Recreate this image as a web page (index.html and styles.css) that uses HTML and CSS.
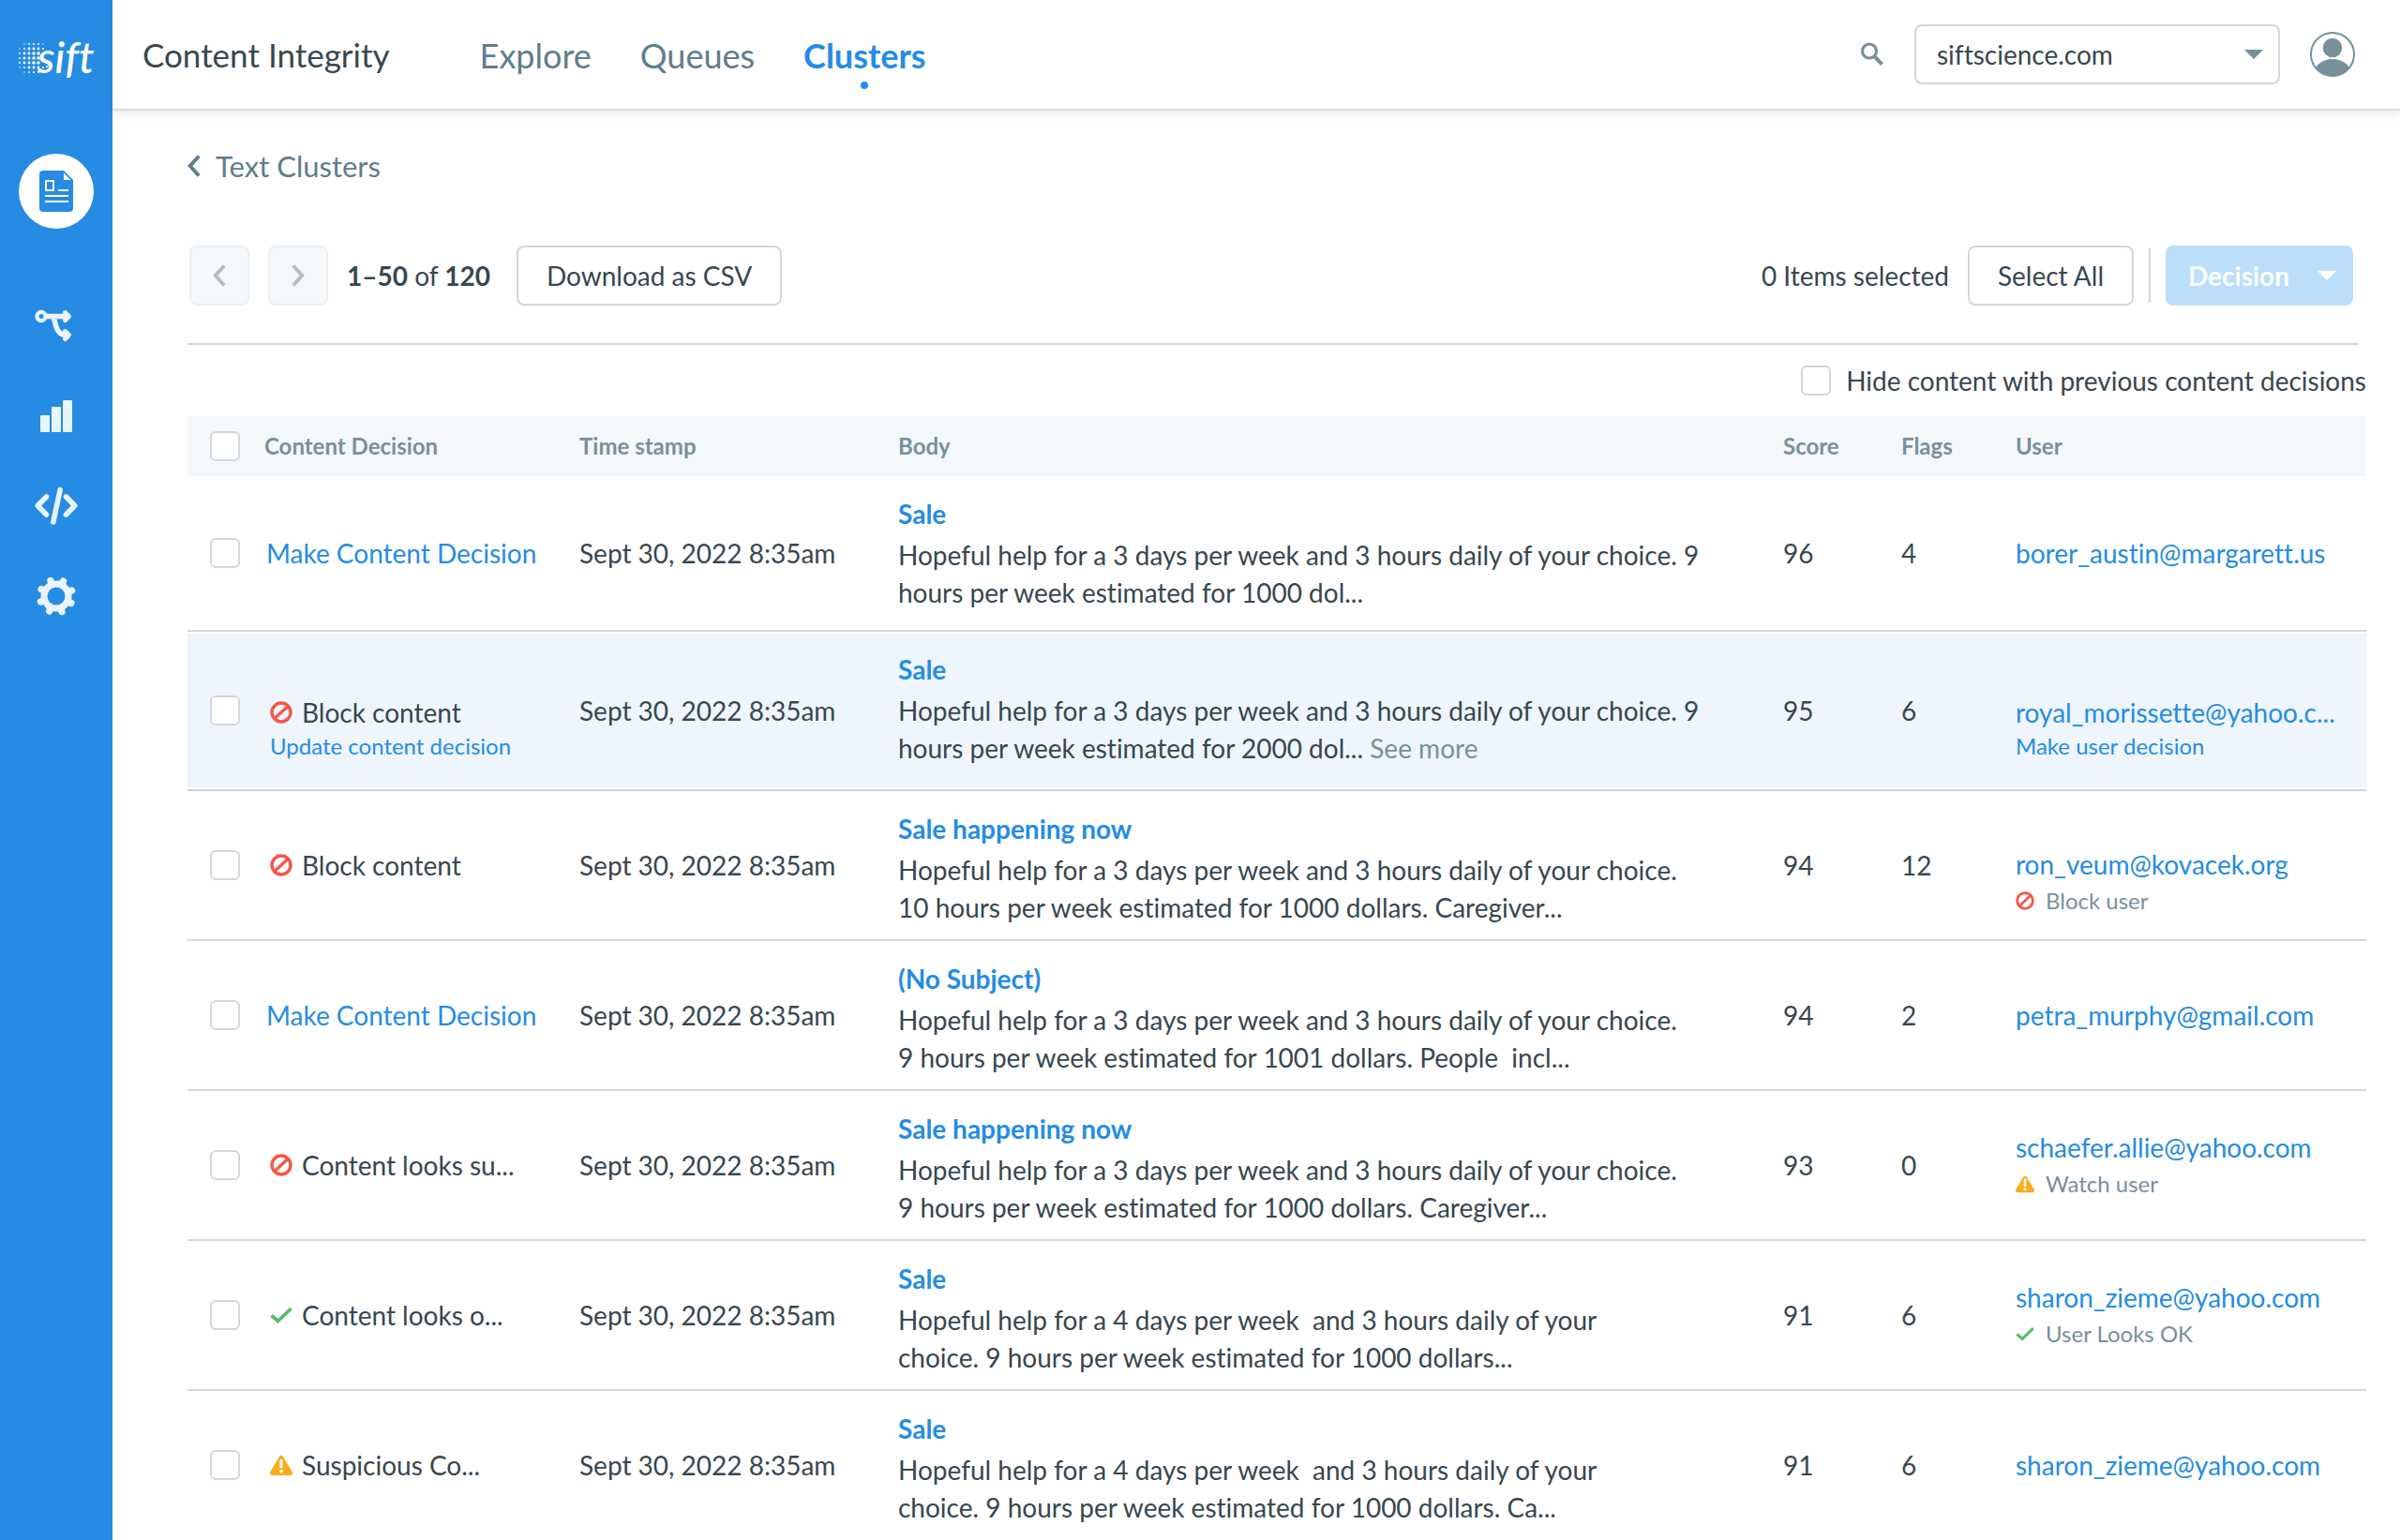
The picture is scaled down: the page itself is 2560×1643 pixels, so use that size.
FILE: index.html
```html
<!DOCTYPE html>
<html lang="en">
<head>
  <meta charset="UTF-8" />
  <meta name="viewport" content="width=device-width, initial-scale=1" />
  <title>Content Integrity - Text Clusters</title>
  <link rel="stylesheet" href="styles.css">
</head>
<body>
  <!-- shared icons -->
  <svg class="sprite" width="0" height="0" aria-hidden="true">
    <symbol id="icon-block" viewBox="0 0 24 24">
      <circle cx="12" cy="12" r="10" fill="none" stroke="#f65646" stroke-width="3.4" />
      <path d="M5.5 18 18.5 6" stroke="#f65646" stroke-width="3.2" />
    </symbol>
    <symbol id="icon-ok" viewBox="0 0 24 24">
      <path d="M1.5 12.5 8.5 18.5 22.5 5" fill="none" stroke="#56bf67" stroke-width="3.8" />
    </symbol>
    <symbol id="icon-warn" viewBox="0 0 24 24">
      <path d="M12 4.5 21.5 20.5H2.5Z" fill="#fbac18" stroke="#fbac18" stroke-width="5" stroke-linejoin="round" />
      <path d="M12 7V14" stroke="#fff" stroke-width="3.2" stroke-linecap="round" />
      <circle cx="12" cy="18.8" r="1.9" fill="#fff" />
    </symbol>
    <symbol id="icon-caret" viewBox="0 0 20 10">
      <path d="M0 0H20L10 10Z" fill="currentColor" />
    </symbol>
    <symbol id="icon-left" viewBox="0 0 14 24">
      <path d="M12.2 1.5 2.8 12 12.2 22.5" fill="none" stroke="currentColor" stroke-width="4" />
    </symbol>
    <symbol id="icon-right" viewBox="0 0 14 24">
      <path d="M1.8 1.5 11.2 12 1.8 22.5" fill="none" stroke="currentColor" stroke-width="4" />
    </symbol>
  </svg>

  <div class="app">
    <aside class="sidebar">
      <a class="logo" href="#" aria-label="sift">
        <svg width="100" height="60" viewBox="-8 -6 100 60">
          <g fill="none" stroke="#fff" stroke-linecap="round">
            <path stroke-width="1.4" d="M8 11h0M8 41h0M3 16h0M3 36h0M28 11h0" />
            <path stroke-width="2" d="M13 11h0M18 11h0M23 11h0M13 41h0M18 41h0M23 41h0M3 21h0M3 26h0M3 31h0M8 16h0M8 36h0M28 16h0M28 36h0M32 35h0" />
            <path stroke-width="2.8" d="M13 16h0M18 16h0M23 16h0M8 21h0M8 26h0M8 31h0M13 36h0M18 36h0M23 36h0M13 21h0M13 26h0M13 31h0" />
            <path stroke-width="3.6" d="M18 21h0M23 21h0M18 26h0M23 26h0M18 31h0M23 31h0" />
          </g>
          <text class="logo-text" x="22" y="42">sift</text>
        </svg>
      </a>
      <nav class="side-nav">
        <a class="side-link active" href="#" aria-label="Content">
          <svg width="36" height="44" viewBox="0 0 36 44">
            <path d="M4 0H26L36 10V40a4 4 0 0 1-4 4H4a4 4 0 0 1-4-4V4a4 4 0 0 1 4-4Z" fill="#268ce3" />
            <path d="M26 2.5V10H33.5Z" fill="#fff" />
            <path d="M7 11H15V21H7Z" fill="none" stroke="#fff" stroke-width="2" stroke-linejoin="round" />
            <path d="M20 21H31M6 27H31M6 33H31" stroke="#fff" stroke-width="2" />
          </svg>
        </a>
        <a class="side-link" href="#" aria-label="Workflows">
          <svg width="46" height="36" viewBox="0 0 46 36">
            <circle cx="7" cy="7.5" r="4.6" fill="none" stroke="#e9f4fd" stroke-width="4.2" />
            <path d="M11 7.5H33M17 7.5C22 7.5 21 14 23 19C25 24.5 28 27.3 33 27.3" fill="none" stroke="#e9f4fd" stroke-width="5.4" />
            <path d="M32.5 3.5 36.5 7.5 32.5 11.5ZM32.5 23.5 36.5 27.3 32.5 31.5Z" fill="#e9f4fd" stroke="#e9f4fd" stroke-width="5" stroke-linejoin="round" />
          </svg>
        </a>
        <a class="side-link" href="#" aria-label="Reports">
          <svg width="36" height="34" viewBox="0 0 36 34">
            <g fill="#e9f4fd">
              <rect x="1" y="16" width="10" height="18" rx="1" />
              <rect x="13" y="7" width="10" height="27" rx="1" />
              <rect x="25" y="0" width="10" height="34" rx="1" />
            </g>
          </svg>
        </a>
        <a class="side-link" href="#" aria-label="Developer">
          <svg width="46" height="42" viewBox="0 0 46 42">
            <path d="M12.5 11 3.2 20.5 12.5 30M33.5 11 42.8 20.5 33.5 30M27.2 3.5 19.8 38" fill="none" stroke="#e9f4fd" stroke-width="5.6" stroke-linecap="round" stroke-linejoin="round" />
          </svg>
        </a>
        <a class="side-link" href="#" aria-label="Settings">
          <svg width="44" height="44" viewBox="-22 -22 44 44">
            <circle r="13" fill="none" stroke="#e9f4fd" stroke-width="7" />
            <path d="M0-14V-17.5M0 14V17.5M-14 0H-17.5M14 0H17.5M9.9-9.9 12.4-12.4M-9.9 9.9-12.4 12.4M9.9 9.9 12.4 12.4M-9.9-9.9-12.4-12.4" transform="rotate(25)" stroke="#e9f4fd" stroke-width="7.4" stroke-linecap="round" />
          </svg>
        </a>
      </nav>
    </aside>

    <div class="main">
      <header class="topbar">
        <h1>Content Integrity</h1>
        <nav class="tabs">
          <a href="#">Explore</a>
          <a href="#">Queues</a>
          <a href="#" class="active">Clusters</a>
        </nav>
        <button class="search" type="button" aria-label="Search">
          <svg width="26" height="26" viewBox="0 0 26 26">
            <circle cx="10" cy="9.5" r="7.5" fill="none" stroke="#78909c" stroke-width="3.2" />
            <path d="M15 15 23.5 23.5" stroke="#78909c" stroke-width="4" />
          </svg>
        </button>
        <div class="site-picker">
          <select aria-label="Site">
            <option>siftscience.com</option>
          </select>
          <svg class="caret" width="20" height="10"><use href="#icon-caret" /></svg>
        </div>
        <a class="avatar" href="#" aria-label="Account">
          <svg width="48" height="48" viewBox="0 0 48 48">
            <clipPath id="avatar-clip"><circle cx="24" cy="24" r="23" /></clipPath>
            <circle cx="24" cy="24" r="23" fill="#fff" stroke="#78909c" stroke-width="2" />
            <circle cx="24" cy="17" r="10.3" fill="#78909c" />
            <ellipse cx="24" cy="45" rx="20" ry="16" fill="#78909c" clip-path="url(#avatar-clip)" />
          </svg>
        </a>
      </header>

      <main class="content">
        <a class="back" href="#">
          <svg width="14" height="24"><use href="#icon-left" /></svg>
          Text Clusters
        </a>

        <div class="toolbar">
          <button class="btn page-btn" type="button" aria-label="Previous page" disabled>
            <svg width="14" height="24"><use href="#icon-left" /></svg>
          </button>
          <button class="btn page-btn" type="button" aria-label="Next page" disabled>
            <svg width="14" height="24"><use href="#icon-right" /></svg>
          </button>
          <span class="range"><b>1–50</b> of <b>120</b></span>
          <button class="btn" type="button">Download as CSV</button>
          <span class="selected">0 Items selected</span>
          <button class="btn" type="button">Select All</button>
          <span class="divider"></span>
          <button class="btn decision-btn" type="button" disabled>
            Decision
            <svg width="20" height="10"><use href="#icon-caret" /></svg>
          </button>
        </div>

        <label class="hide-decided">
          <input type="checkbox">
          Hide content with previous content decisions
        </label>

        <table class="clusters">
          <colgroup>
            <col class="col-check">
            <col class="col-decision">
            <col class="col-time">
            <col class="col-body">
            <col class="col-score">
            <col class="col-flags">
            <col class="col-user">
          </colgroup>
          <thead>
            <tr>
              <th><input type="checkbox" aria-label="Select all rows"></th>
              <th>Content Decision</th>
              <th>Time stamp</th>
              <th>Body</th>
              <th>Score</th>
              <th>Flags</th>
              <th>User</th>
            </tr>
          </thead>
          <tbody>
            <tr class="first">
              <td><input type="checkbox" aria-label="Select row 1"></td>
              <td class="decision"><a href="#">Make Content Decision</a></td>
              <td>Sept 30, 2022 8:35am</td>
              <td class="body">
                <a class="subject" href="#">Sale</a>
                <p>Hopeful help for a 3 days per week and 3 hours daily of your choice. 9<br>hours per week estimated for 1000 dol...</p>
              </td>
              <td>96</td>
              <td>4</td>
              <td><a href="#">borer_austin@margarett.us</a></td>
            </tr>
            <tr class="hovered">
              <td><input type="checkbox" aria-label="Select row 2"></td>
              <td class="decision hang">
                <div class="status"><svg width="24" height="24"><use href="#icon-block" /></svg>Block content</div>
                <a class="sub" href="#">Update content decision</a>
              </td>
              <td>Sept 30, 2022 8:35am</td>
              <td class="body">
                <a class="subject" href="#">Sale</a>
                <p>Hopeful help for a 3 days per week and 3 hours daily of your choice. 9<br>hours per week estimated for 2000 dol... <a class="more" href="#">See more</a></p>
              </td>
              <td>95</td>
              <td>6</td>
              <td class="hang">
                <a href="#">royal_morissette@yahoo.c...</a>
                <a class="sub" href="#">Make user decision</a>
              </td>
            </tr>
            <tr>
              <td><input type="checkbox" aria-label="Select row 3"></td>
              <td class="decision">
                <div class="status"><svg width="24" height="24"><use href="#icon-block" /></svg>Block content</div>
              </td>
              <td>Sept 30, 2022 8:35am</td>
              <td class="body">
                <a class="subject" href="#">Sale happening now</a>
                <p>Hopeful help for a 3 days per week and 3 hours daily of your choice.<br>10 hours per week estimated for 1000 dollars. Caregiver...</p>
              </td>
              <td>94</td>
              <td>12</td>
              <td class="hang">
                <a href="#">ron_veum@kovacek.org</a>
                <div class="sub"><svg width="20" height="20"><use href="#icon-block" /></svg>Block user</div>
              </td>
            </tr>
            <tr>
              <td><input type="checkbox" aria-label="Select row 4"></td>
              <td class="decision"><a href="#">Make Content Decision</a></td>
              <td>Sept 30, 2022 8:35am</td>
              <td class="body">
                <a class="subject" href="#">(No Subject)</a>
                <p>Hopeful help for a 3 days per week and 3 hours daily of your choice.<br>9 hours per week estimated for 1001 dollars. People&nbsp; incl...</p>
              </td>
              <td>94</td>
              <td>2</td>
              <td><a href="#">petra_murphy@gmail.com</a></td>
            </tr>
            <tr>
              <td><input type="checkbox" aria-label="Select row 5"></td>
              <td class="decision">
                <div class="status"><svg width="24" height="24"><use href="#icon-block" /></svg>Content looks su...</div>
              </td>
              <td>Sept 30, 2022 8:35am</td>
              <td class="body">
                <a class="subject" href="#">Sale happening now</a>
                <p>Hopeful help for a 3 days per week and 3 hours daily of your choice.<br>9 hours per week estimated for 1000 dollars. Caregiver...</p>
              </td>
              <td>93</td>
              <td>0</td>
              <td>
                <a href="#">schaefer.allie@yahoo.com</a>
                <div class="sub"><svg width="20" height="20"><use href="#icon-warn" /></svg>Watch user</div>
              </td>
            </tr>
            <tr>
              <td><input type="checkbox" aria-label="Select row 6"></td>
              <td class="decision">
                <div class="status"><svg width="24" height="24"><use href="#icon-ok" /></svg>Content looks o...</div>
              </td>
              <td>Sept 30, 2022 8:35am</td>
              <td class="body">
                <a class="subject" href="#">Sale</a>
                <p>Hopeful help for a 4 days per week&nbsp; and 3 hours daily of your<br>choice. 9 hours per week estimated for 1000 dollars...</p>
              </td>
              <td>91</td>
              <td>6</td>
              <td>
                <a href="#">sharon_zieme@yahoo.com</a>
                <div class="sub"><svg width="20" height="20"><use href="#icon-ok" /></svg>User Looks OK</div>
              </td>
            </tr>
            <tr>
              <td><input type="checkbox" aria-label="Select row 7"></td>
              <td class="decision">
                <div class="status"><svg width="24" height="24"><use href="#icon-warn" /></svg>Suspicious Co...</div>
              </td>
              <td>Sept 30, 2022 8:35am</td>
              <td class="body">
                <a class="subject" href="#">Sale</a>
                <p>Hopeful help for a 4 days per week&nbsp; and 3 hours daily of your<br>choice. 9 hours per week estimated for 1000 dollars. Ca...</p>
              </td>
              <td>91</td>
              <td>6</td>
              <td><a href="#">sharon_zieme@yahoo.com</a></td>
            </tr>
          </tbody>
        </table>
      </main>
    </div>
  </div>
</body>
</html>
```

FILE: styles.css
```css
* {
  box-sizing: border-box;
}
body {
  margin: 0;
  background: #fff;
  color: #37474f;
  font-family: Lato, 'Open Sans', sans-serif;
  font-size: 28px;
  font-variant-ligatures: none;
  line-height: 40px;
}
a {
  color: #258ce4;
  text-decoration: none;
}
button, select {
  font: inherit;
  color: inherit;
}
svg {
  display: block;
  flex-shrink: 0;
}
.sprite {
  position: absolute;
}
.app {
  display: flex;
  min-height: 100vh;
}

/* sidebar */
.sidebar {
  width: 120px;
  flex-shrink: 0;
  background: #268ce3;
  display: flex;
  flex-direction: column;
  align-items: center;
}
.logo {
  margin-top: 30px;
}
.logo-text {
  fill: #fff;
  font-size: 46px;
  font-style: italic;
  font-weight: 500;
}
.side-nav {
  display: flex;
  flex-direction: column;
  align-items: center;
  gap: 32px;
  margin-top: 74px;
}
.side-link {
  width: 80px;
  height: 64px;
  display: flex;
  align-items: center;
  justify-content: center;
}
.side-link.active {
  height: 80px;
  margin-bottom: 40px;
  border-radius: 50%;
  background: #fff;
}

/* top bar */
.main {
  flex: 1;
  min-width: 0;
}
.topbar {
  display: flex;
  align-items: center;
  height: 118px;
  padding: 0 48px 0 32px;
  border-bottom: 2px solid #dcdcdc;
  box-shadow: 0 2px 12px #0000001a;
}
.topbar h1 {
  margin: 0;
  font-size: 35px;
  font-weight: normal;
}
.tabs {
  display: flex;
  gap: 52px;
  margin-left: 96px;
  padding-top: 2px;
  font-size: 36px;
}
.tabs a {
  position: relative;
  color: #607d8b;
}
.tabs .active {
  color: #258ce4;
  font-weight: bold;
}
.tabs .active::after {
  content: "";
  position: absolute;
  left: 50%;
  bottom: -16px;
  width: 8px;
  height: 8px;
  margin-left: -4px;
  border-radius: 50%;
  background: #258ce4;
}
.search {
  margin-left: auto;
  padding: 0;
  border: none;
  background: none;
}
.site-picker {
  position: relative;
  margin: 0 32px;
}
.site-picker select {
  appearance: none;
  width: 390px;
  height: 64px;
  padding: 0 22px;
  border: 2px solid #cfd8dc;
  border-radius: 8px;
  background: #fff;
}
.site-picker .caret {
  position: absolute;
  right: 18px;
  top: 27px;
  color: #78909c;
  pointer-events: none;
}

/* content */
.content {
  padding: 39px 36px 0 80px;
}
.back {
  display: inline-flex;
  align-items: center;
  gap: 16px;
  color: #607d8b;
  font-size: 31px;
}
.toolbar {
  display: flex;
  align-items: center;
  gap: 20px;
  margin-right: 8px;
  padding: 64px 6px 40px 2px;
  border-bottom: 2px solid #cfd8dc;
}
.btn {
  height: 64px;
  padding: 0 30px;
  border: 2px solid #cfd8dc;
  border-radius: 8px;
  background: #fff;
}
.page-btn {
  width: 64px;
  padding: 0 23px;
  border-color: #eceff1;
  background: #f4f8fb;
  color: #b0bec5;
}
.range {
  margin-right: 8px;
}
.selected {
  margin-left: auto;
}
.divider {
  width: 2px;
  height: 58px;
  margin: 0 -4px;
  background: #cfd8dc;
}
.decision-btn {
  display: flex;
  align-items: center;
  justify-content: space-between;
  width: 200px;
  padding: 0 18px 0 24px;
  border: none;
  background: #bbdffb;
  color: #fff;
  font-weight: bold;
}
.hide-decided {
  display: flex;
  align-items: center;
  justify-content: flex-end;
  gap: 16px;
  padding: 18px 0;
}
input[type="checkbox"] {
  appearance: none;
  display: block;
  width: 32px;
  height: 32px;
  margin: 0;
  border: 2px solid #cfd8dc;
  border-radius: 6px;
  background: #fff;
}

/* table */
.clusters {
  width: 100%;
  table-layout: fixed;
  border-spacing: 0;
}
.col-check { width: 82px; }
.col-decision { width: 336px; }
.col-time { width: 340px; }
.col-score { width: 126px; }
.col-flags { width: 122px; }
.col-user { width: 374px; }

.clusters th {
  height: 64px;
  padding: 0;
  background: #f4f8fb;
  color: #78909c;
  font-size: 24px;
  font-weight: bold;
  text-align: left;
}
.clusters td {
  height: 160px;
  padding: 0;
  border-bottom: 2px solid #cfd8dc;
}
.clusters th:first-child, .clusters td:first-child {
  padding-left: 24px;
}
.clusters tr:last-child td {
  height: 158px;
  border-bottom: none;
}
.clusters .first td {
  height: 166px;
}
.clusters .hovered td {
  height: 170px;
  background: #eef5fd;
  box-shadow: inset 0 2px #fff, inset 0 -2px #fff;
}
.clusters .decision {
  padding-left: 2px;
}
.clusters .body {
  vertical-align: top;
  padding-top: 20px;
}
.body p {
  margin: 4px 0 0;
}
.subject {
  font-weight: bold;
}
.more {
  color: #78909c;
}
.status {
  display: flex;
  align-items: center;
  gap: 10px;
}
.sub {
  display: flex;
  align-items: center;
  gap: 12px;
  font-size: 24px;
  line-height: 32px;
}
.status, .decision .sub {
  margin-left: 4px;
}
div.sub {
  color: #78909c;
  line-height: 38px;
}
/* first line stays on the row's middle, second line hangs below */
.clusters .hang {
  padding-top: 36px;
}
```
